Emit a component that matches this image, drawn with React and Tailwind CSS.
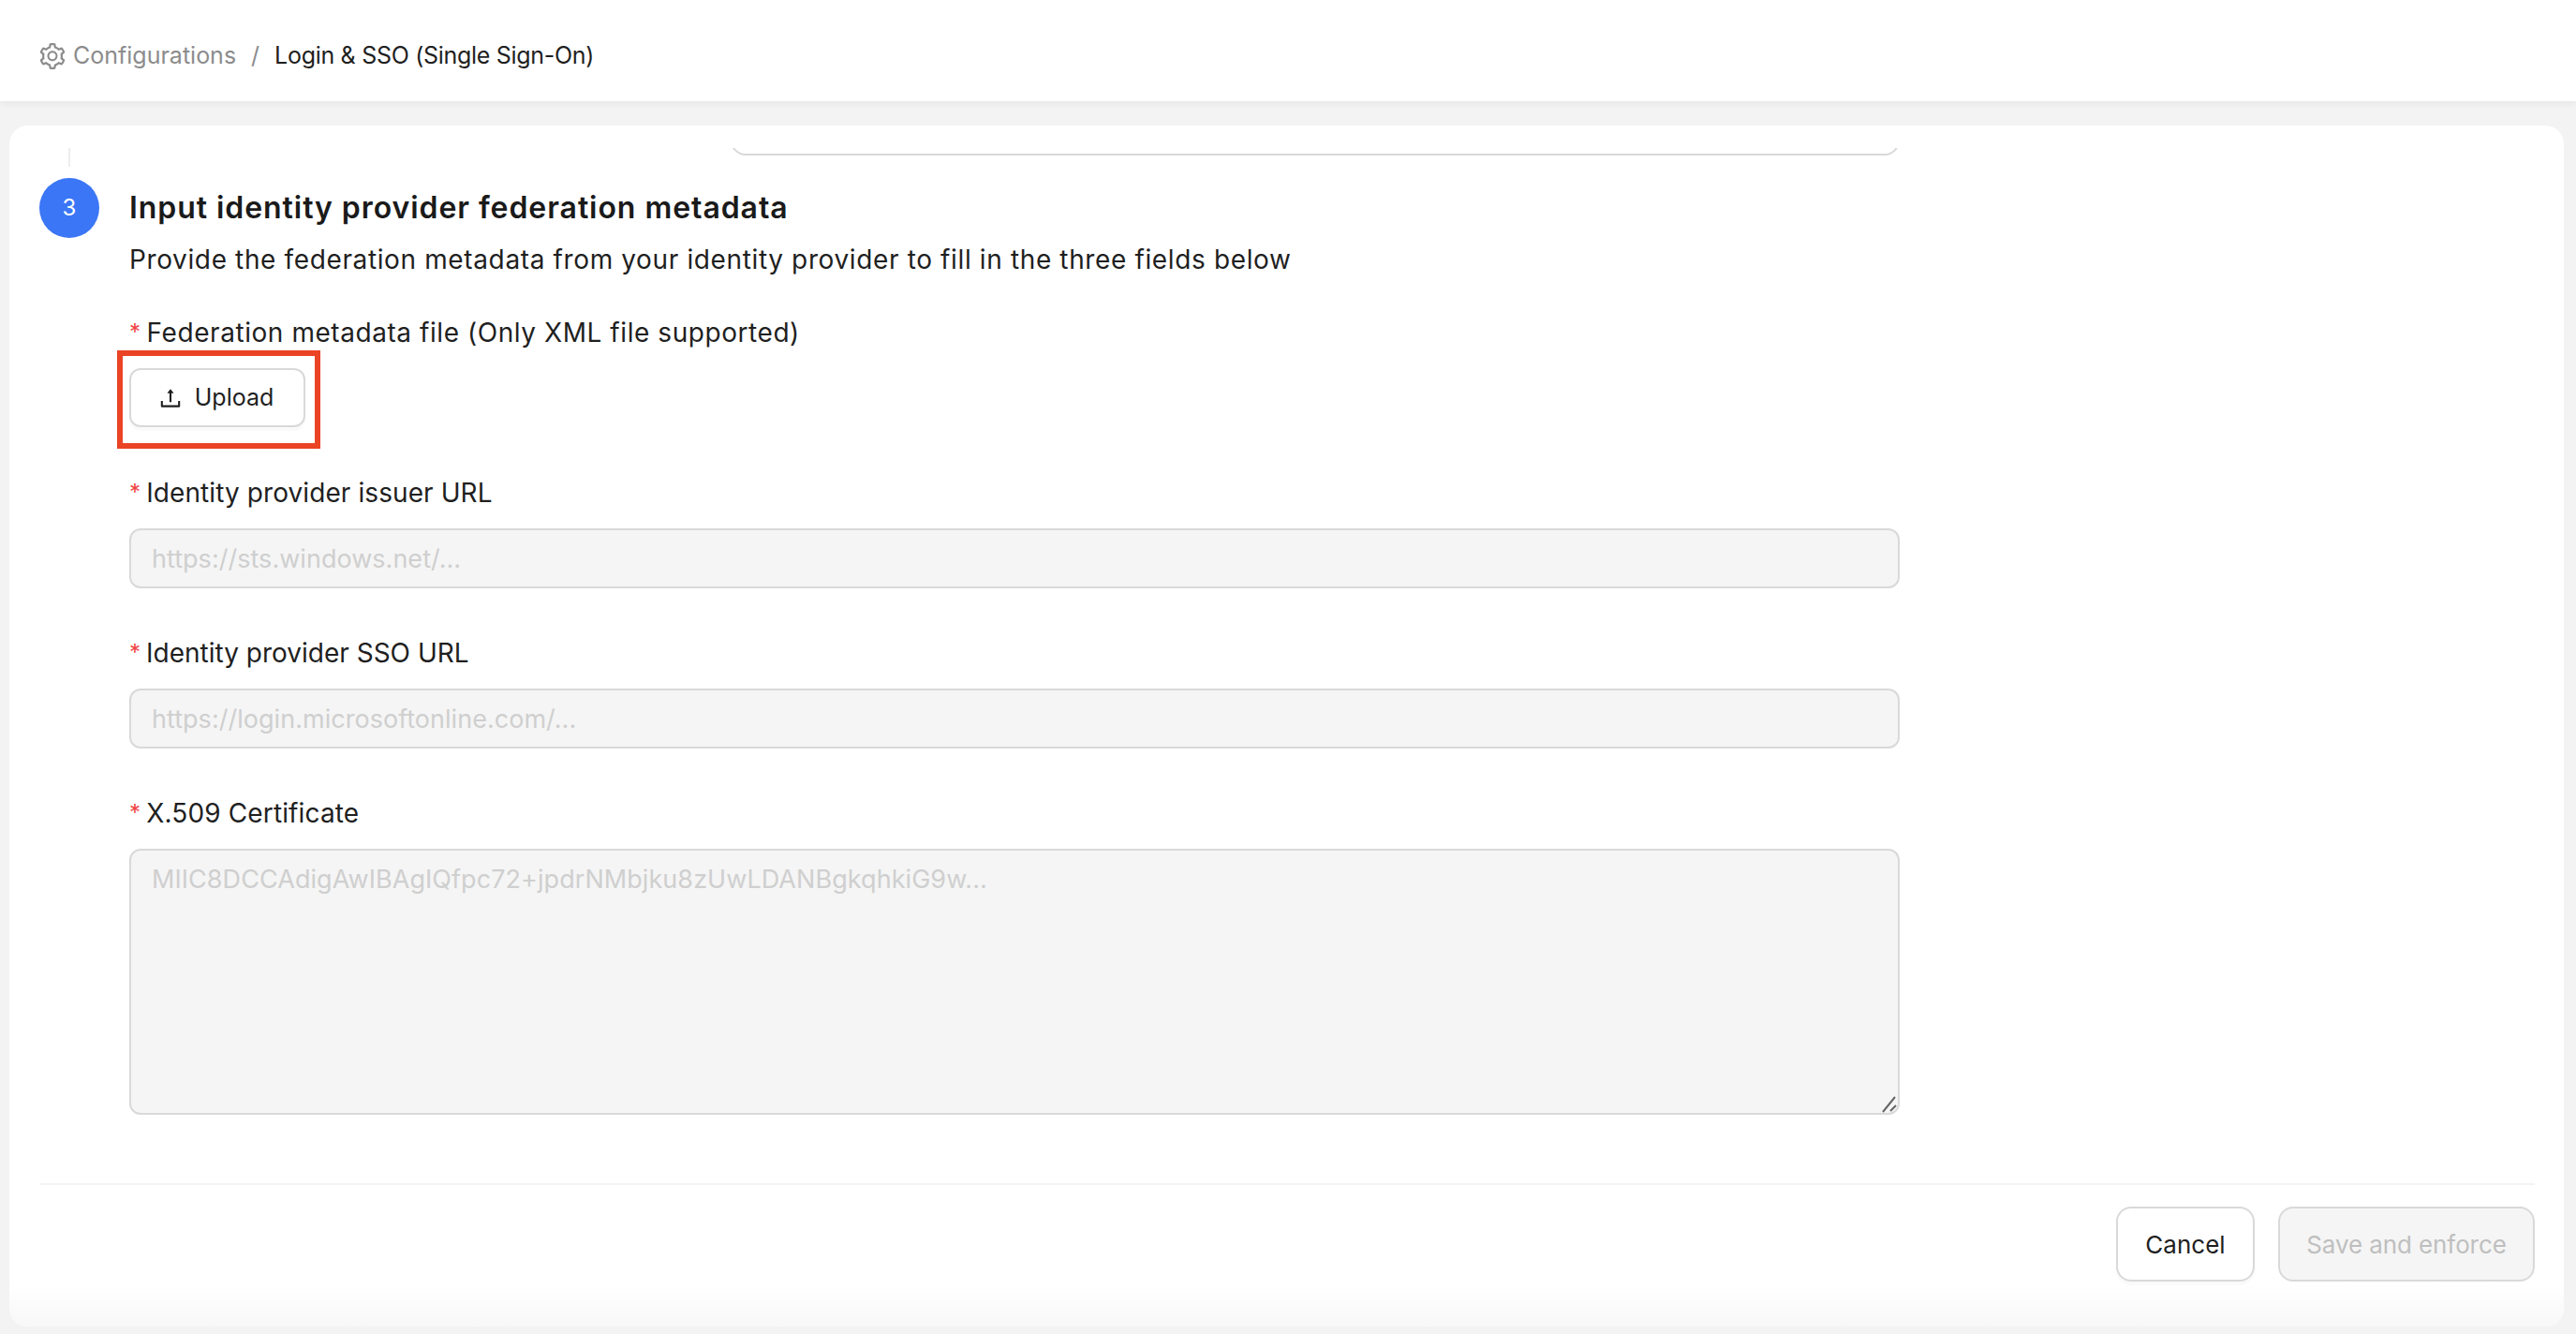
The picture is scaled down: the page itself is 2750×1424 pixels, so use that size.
import { AiOutlineSetting, AiOutlineUpload } from "react-icons/ai";

const FONT = "font-['Inter','Noto_Sans',sans-serif]";

function FieldLabel({ children, tracking }) {
  return (
    <label className={`flex h-[44px] items-center pt-px text-[28px] text-[#1f1f1f] ${tracking}`}>
      <span className="mr-[6px] text-[24px] leading-none text-[#ef4444]">*</span>
      {children}
    </label>
  );
}

function TextField({ label, placeholder, tracking }) {
  return (
    <div className="mb-[46px]">
      <div className="mb-[17px]">
        <FieldLabel tracking={tracking}>{label}</FieldLabel>
      </div>
      <input
        disabled
        placeholder={placeholder}
        className="block h-[64px] w-[1890px] rounded-[12px] border-2 border-[#d9d9d9] bg-[#f5f5f5] px-[22px] text-[27px] tracking-[0.03px] placeholder:text-[#cfcfcf]"
      />
    </div>
  );
}

export default function App() {
  return (
    <div className={`flex h-screen flex-col overflow-hidden bg-[#f3f3f3] ${FONT}`}>
      {/* Breadcrumb */}
      <header className="flex h-[108px] shrink-0 items-center bg-white pl-[40px] pt-[11px] text-[25px] shadow-[0_2px_8px_rgba(0,0,0,0.06)]">
        <AiOutlineSetting className="mr-[6px] text-[32px] text-[#8c8c8c]" />
        <span className="text-[#8c8c8c]">Configurations</span>
        <span className="mx-[16px] text-[#8c8c8c]">/</span>
        <span className="tracking-[-0.3px] text-[#1f1f1f]">Login & SSO (Single Sign-On)</span>
      </header>

      <main className="mb-[8px] ml-[10px] mr-[13px] mt-[26px] flex min-h-0 flex-1 flex-col overflow-hidden rounded-[20px] bg-white">
        <div className="min-h-0 flex-1 overflow-hidden px-[32px] pt-[24px]">
          {/* End of the previous step, scrolled away */}
          <div className="flex h-[32px]">
            <div className="ml-[31px] h-[20px] w-[2px] bg-[#eeeeee]" />
            <div className="ml-[705px] h-[8px] w-[1248px] overflow-hidden">
              <div className="-mt-[56px] h-[64px] rounded-[16px] border-2 border-[#d9d9d9]" />
            </div>
          </div>

          <div className="flex gap-[32px]">
            <div className="flex h-[64px] w-[64px] shrink-0 items-center justify-center rounded-full bg-[#3b76f6] text-[24px] text-white">
              3
            </div>
            <div>
              <h2 className="flex h-[64px] items-center text-[32px] font-semibold tracking-[0.94px] text-[#1a1a1a]">
                Input identity provider federation metadata
              </h2>
              <p className="mb-[33px] mt-px h-[44px] text-[28px] leading-[44px] tracking-[0.63px] text-[#1f1f1f]">
                Provide the federation metadata from your identity provider to fill in the three fields below
              </p>

              <div className="mb-[47px]">
                <div className="mb-[17px]">
                  <FieldLabel tracking="tracking-[0.56px]">Federation metadata file (Only XML file supported)</FieldLabel>
                </div>
                {/* Highlight box lies over the button */}
                <div className="relative w-fit">
                  <button className="flex h-[63px] w-[188px] items-center justify-center gap-[12px] rounded-[12px] border-2 border-[#d9d9d9] bg-white pr-[4px] text-[25px] text-[#1f1f1f] shadow-[0_4px_0_rgba(0,0,0,0.02)]">
                    <AiOutlineUpload className="text-[28px]" />
                    Upload
                  </button>
                  <div className="absolute -bottom-[23px] -left-[13px] -right-[16px] -top-[19px] border-[6px] border-[#ea4425]" />
                </div>
              </div>

              <TextField label="Identity provider issuer URL" placeholder="https://sts.windows.net/..." tracking="tracking-[0.09px]" />
              <TextField label="Identity provider SSO URL" placeholder="https://login.microsoftonline.com/..." tracking="tracking-normal" />

              <div className="mb-[17px]">
                <FieldLabel tracking="tracking-[0.14px]">X.509 Certificate</FieldLabel>
              </div>
              <div className="relative w-[1890px]">
                <textarea
                  disabled
                  placeholder="MIIC8DCCAdigAwIBAgIQfpc72+jpdrNMbjku8zUwLDANBgkqhkiG9w..."
                  className="block h-[284px] w-full resize-none rounded-[12px] border-2 border-[#d9d9d9] bg-[#f5f5f5] px-[22px] py-[11px] text-[27px] tracking-[0.06px] placeholder:text-[#cfcfcf]"
                />
                {/* Resize grip */}
                <svg className="absolute bottom-[2px] right-[3px]" width="16" height="18" viewBox="0 0 16 18" fill="none" stroke="#666666" strokeWidth="2">
                  <path d="M1 17 14 1M9 16l6-6" />
                </svg>
              </div>
            </div>
          </div>
        </div>

        <footer className="h-[153px] shrink-0 bg-gradient-to-b from-white from-[70%] to-[#f8f8f8] px-[32px]">
          <div className="h-[2px] w-[2664px] bg-[#f3f3f3]" />
          <div className="mt-[23px] flex w-[2664px] justify-end gap-[25px]">
            <button className="h-[80px] w-[148px] rounded-[16px] border-2 border-[#d9d9d9] bg-white text-[26px] text-[#1f1f1f] shadow-[0_4px_0_rgba(0,0,0,0.02)]">
              Cancel
            </button>
            <button
              disabled
              className="h-[80px] w-[274px] rounded-[16px] border-2 border-[#d9d9d9] bg-[#f5f5f5] text-[26px] tracking-[-0.1px] text-[#bfbfbf]"
            >
              Save and enforce
            </button>
          </div>
        </footer>
      </main>
    </div>
  );
}
